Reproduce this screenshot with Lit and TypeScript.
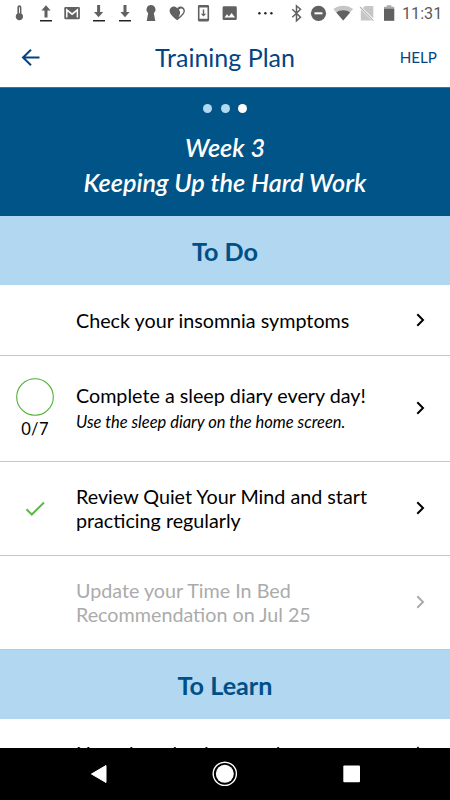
import { LitElement, html, svg, css, nothing } from "lit";
import { customElement } from "lit/decorators.js";
import { classMap } from "lit/directives/class-map.js";

const G = "#616161";

// Every status icon shares one strip whose units are CSS pixels.
const statusIcons = svg`
  <g fill=${G}>
    <path d="M17.400 7.200a2 2 0 0 1 4 0v6.300a3.700 3.700 0 1 1-4 0z"/>
    <path d="M19 7.200h.9v6h-.9z" fill="#fff"/>
    <path d="M46 5.200l4.600 5.300h-3.100v7h-3v-7h-3.100z"/>
    <path d="M40 20h12v1.500H40z" fill="#222"/>
    <rect x="64.300" y="7" width="15.600" height="12.200" rx="1.200"/>
    <path d="M66.800 17.600V9.800l5.300 4.400 5.300-4.400v7.800" fill="none" stroke="#fff" stroke-width="1.500"/>
    <path d="M97.100 5h3v7h3.100l-4.600 5.200L94 12h3.100z"/>
    <path d="M93 20h12v1.500H93z" fill="#222"/>
    <path d="M123.500 5h3v7h3.100l-4.600 5.200-4.600-5.200h3.100z"/>
    <path d="M119 20h12v1.500h-12z" fill="#222"/>
    <path d="M151 5a4.500 4.500 0 0 1 2.800 8l1.500 8h-8.600l1.500-8A4.500 4.500 0 0 1 151 5z"/>
    <path d="M177.200 20.300c-4.500-3.900-7.600-6.400-7.600-9.600 0-4.300 5.300-5.800 7.600-2.500 2.300-3.300 7.700-1.800 7.700 2.500 0 3.200-3.200 5.700-7.700 9.600z"/>
    <path d="M178.500 17.300c2.400-4.300 1.800-5.800.4-7.600 1.700-2.100 4.600-1.300 4.600 1.200 0 2-1.700 3.500-5 6.400z" fill="#fff"/>
    <path fill-rule="evenodd" d="M199.300 5h8.400a1.400 1.400 0 0 1 1.400 1.400v13.700a1.400 1.400 0 0 1-1.400 1.400h-8.400a1.400 1.400 0 0 1-1.400-1.400V6.400A1.400 1.400 0 0 1 199.300 5zm.2 2.600v11.200h8V7.600z"/>
    <path d="M202.800 9.500h1.400v4.200h2l-2.700 2.900-2.700-2.900h2z"/>
    <path fill-rule="evenodd" d="M224 6.300h11.400a1.400 1.400 0 0 1 1.400 1.400v11a1.400 1.400 0 0 1-1.400 1.400H224a1.400 1.400 0 0 1-1.400-1.400v-11A1.400 1.400 0 0 1 224 6.300zm.4 11.300h10.700l-3.500-4.700-2.700 3.500-1.900-2.200z"/>
    <g fill="#222"><circle cx="259.400" cy="13.200" r="1.200"/><circle cx="265.400" cy="13.200" r="1.200"/><circle cx="271.400" cy="13.200" r="1.200"/></g>
    <path d="M292.300 9.300l8.200 8-4 3.500V5.800l4 3.500-8.200 8" fill="none" stroke=${G} stroke-width="1.500"/>
    <circle cx="318.500" cy="13.300" r="7.600"/>
    <path d="M314.500 12.300h8v2h-8z" fill="#fff"/>
    <path d="M343.200 20.500L333.300 9.100c5.400-4.500 14.400-4.500 19.800 0z" fill="#c6c6c6"/>
    <path d="M343.200 20.500l-6.900-8c3.800-3 10-3 13.800 0z"/>
    <path d="M365 6h8.300v12.600L362.700 8z" fill="#c6c6c6"/>
    <path d="M360.800 9.500v11H371.800z" fill="#c6c6c6"/>
    <path d="M360 7l13.300 13.600" stroke="#b4b4b4" stroke-width="1.100"/>
    <path d="M386.800 5.200h4.600v1.500h2.800v14h-10.200v-14h2.800z" fill="#aaa"/>
    <path d="M384 8.800h10.200v11.900H384z"/>
  </g>`;

interface Task {
  title: string;
  size: string;
  note?: string;
  progress?: string;
  done?: boolean;
  disabled?: boolean;
}

const tasks: Task[] = [
  { title: "Check your insomnia symptoms", size: "single" },
  { title: "Complete a sleep diary every day!", note: "Use the sleep diary on the home screen.", progress: "0/7", size: "tall" },
  { title: "Review Quiet Your Mind and start practicing regularly", done: true, size: "double" },
  { title: "Update your Time In Bed Recommendation on Jul 25", disabled: true, size: "double" },
];

@customElement("app-root")
export class AppRoot extends LitElement {
  static styles = css`
    :host { display: flex; flex-direction: column; width: 450px; height: 800px; overflow: hidden; background: #fff; color: #000; font-family: Lato, "Open Sans", sans-serif; }
    * { box-sizing: border-box; }
    svg { display: block; flex: none; }
    .status { height: 28px; flex: none; display: flex; align-items: center; }
    .clock { font: 16.200px/28px Roboto, sans-serif; color: #5a5a5a; margin-left: 2px; white-space: nowrap; }
    .bar { height: 60px; flex: none; display: grid; grid-template-columns: 80px 1fr 80px; align-items: center; border-bottom: 1px solid #4b6f92; color: #044484; }
    .back { padding-left: 21px; }
    .title { text-align: center; font-size: 25px; line-height: 30px; padding-bottom: 1px; }
    .help { text-align: right; padding: 0 13px 1px 0; font-size: 15.200px; line-height: 20px; }
    .banner { height: 128px; flex: none; background: #005487; color: #fff; text-align: center; padding-top: 16px; font: italic 600 25.300px/35px Lato, sans-serif; }
    .dots { display: flex; justify-content: center; gap: 8.500px; margin-bottom: 17px; }
    .dot { width: 9px; height: 9px; border-radius: 50%; background: #b3d8f1; }
    .on { background: #fff; }
    .section { height: 69px; flex: none; background: #b2d7f1; color: #005088; text-align: center; font-size: 25.200px; font-weight: 700; line-height: 71px; }
    .row { flex: none; display: grid; grid-template-columns: 76px 1fr 60px; align-items: center; border-bottom: 1px solid #c6c6c6; }
    .single { height: 71px; }
    .tall { height: 106px; padding-bottom: 2px; }
    .double { height: 94px; padding-bottom: 1px; }
    .lead { width: 70px; display: flex; flex-direction: column; align-items: center; padding-top: 2px; }
    .body { padding-top: 2px; }
    .count { font-size: 16.500px; line-height: 20px; margin-top: 3px; letter-spacing: .3px; }
    .text { font-size: 19.730px; line-height: 24px; }
    .note { font-size: 16.500px; font-style: italic; line-height: 22px; margin-top: 3px; white-space: nowrap; }
    .chev { padding-left: 20px; }
    .off { color: #ababab; }
    .peek { height: 29px; flex: none; overflow: hidden; padding: 23px 0 0 76px; display: grid; grid-template-columns: 1fr 60px; }
    .peek .chev { padding-top: 4px; }
    .nav { height: 52px; flex: none; background: #000; }
  `;

  private chevron() {
    return html`<div class="chev"><svg width="20" height="14"><path d="M7.300 1.300L13 7l-5.700 5.700" fill="none" stroke="currentColor" stroke-width="2"/></svg></div>`;
  }

  private row(t: Task) {
    return html`<div class=${classMap({ row: true, [t.size]: true, off: !!t.disabled })}>
      <div class="lead">
        ${t.progress ? html`<svg width="38" height="38"><circle cx="19" cy="19" r="18.300" fill="none" stroke="#4caf32" stroke-width="1.100"/></svg><div class="count">${t.progress}</div>` : nothing}
        ${t.done ? html`<svg width="20" height="16"><path d="M1.500 8.300l5.300 5.200L19 1.500" fill="none" stroke="#5cb848" stroke-width="2"/></svg>` : nothing}
      </div>
      <div class="body"><div class="text">${t.title}</div>${t.note ? html`<div class="note">${t.note}</div>` : nothing}</div>
      ${this.chevron()}
    </div>`;
  }

  render() {
    return html`
      <div class="status"><svg width="400" height="28">${statusIcons}</svg><div class="clock">11:31</div></div>
      <div class="bar">
        <div class="back"><svg width="20" height="18"><path d="M18.500 8.500H2M10 .7L2 8.500l8 7.800" fill="none" stroke="currentColor" stroke-width="2"/></svg></div>
        <div class="title">Training Plan</div>
        <div class="help">HELP</div>
      </div>
      <div class="banner">
        <div class="dots"><div class="dot"></div><div class="dot"></div><div class="dot on"></div></div>
        <div>Week 3</div><div>Keeping Up the Hard Work</div>
      </div>
      <div class="section">To Do</div>
      ${tasks.map((t) => this.row(t))}
      <div class="section">To Learn</div>
      <div class="peek"><div class="text">How thoughts impact sleep</div>${this.chevron()}</div>
      <div class="nav"><svg width="450" height="52">
        <path d="M91.500 26L106 17.500v17z" fill="#fff" stroke="#fff" stroke-linejoin="round"/>
        <circle cx="224.800" cy="25.800" r="9" fill="#fff"/><circle cx="224.800" cy="25.800" r="11.600" fill="none" stroke="#fff" stroke-width="1.400"/>
        <rect x="343.300" y="17.500" width="16.700" height="16.700" rx="1" fill="#fff"/>
      </svg></div>`;
  }
}
